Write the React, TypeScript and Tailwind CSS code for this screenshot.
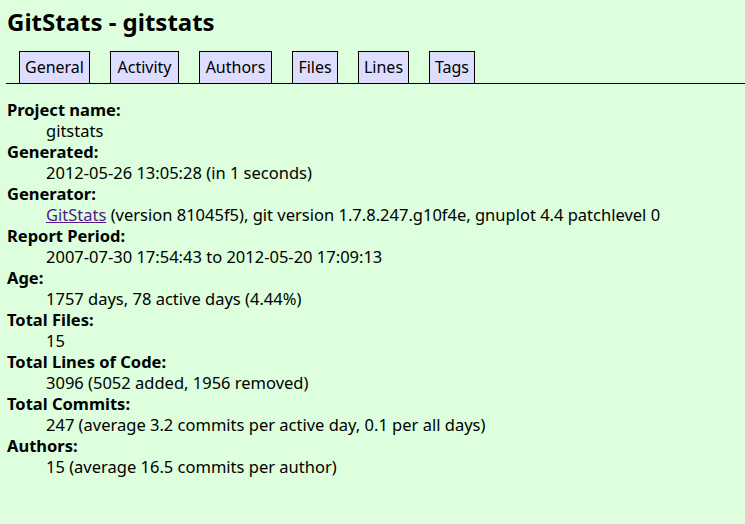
import React from 'react';

const tabs = [
    { name: 'General', w: 'w-[71px]' },
    { name: 'Activity', w: 'w-[69px]' },
    { name: 'Authors', w: 'w-[73px]' },
    { name: 'Files', w: 'w-[46px]' },
    { name: 'Lines', w: 'w-[51px]' },
    { name: 'Tags', w: 'w-[46px]' },
];

const rows: { label: string; value: React.ReactNode }[] = [
    { label: 'Project name:', value: 'gitstats' },
    { label: 'Generated:', value: '2012-05-26 13:05:28 (in 1 seconds)' },
    {
        label: 'Generator:',
        value: (
            <>
                <a href="#" className="text-[#551a8b] underline">GitStats</a> (version 81045f5), git version 1.7.8.247.g10f4e, gnuplot 4.4 patchlevel 0
            </>
        ),
    },
    { label: 'Report Period:', value: '2007-07-30 17:54:43 to 2012-05-20 17:09:13' },
    { label: 'Age:', value: '1757 days, 78 active days (4.44%)' },
    { label: 'Total Files:', value: '15' },
    { label: 'Total Lines of Code:', value: '3096 (5052 added, 1956 removed)' },
    { label: 'Total Commits:', value: '247 (average 3.2 commits per active day, 0.1 per all days)' },
    { label: 'Authors:', value: '15 (average 16.5 commits per author)' },
];

const App: React.FC = () => {
    return (
        <div className="min-h-screen bg-[#ddffdd] text-black pl-[6px] pt-[6px] font-['Noto_Sans',sans-serif] text-[16.5px] leading-[21px]">
            <h1 className="text-[24px] leading-[32px] font-bold pl-px">GitStats - gitstats</h1>

            {/* nav tabs */}
            <div className="mt-[13px] border-b border-black pl-[13px] flex gap-[20px] text-[16px]">
                {tabs.map((t) => (
                    <a key={t.name} href="#" className={`block ${t.w} text-center bg-[#ddddff] border border-b-0 border-black h-[32px] leading-[31px]`}>
                        {t.name}
                    </a>
                ))}
            </div>

            <dl className="mt-[15px] pl-px">
                {rows.map((r) => (
                    <React.Fragment key={r.label}>
                        <dt className="font-bold">{r.label}</dt>
                        <dd className="ml-[39px]">{r.value}</dd>
                    </React.Fragment>
                ))}
            </dl>
        </div>
    );
};

export default App;
